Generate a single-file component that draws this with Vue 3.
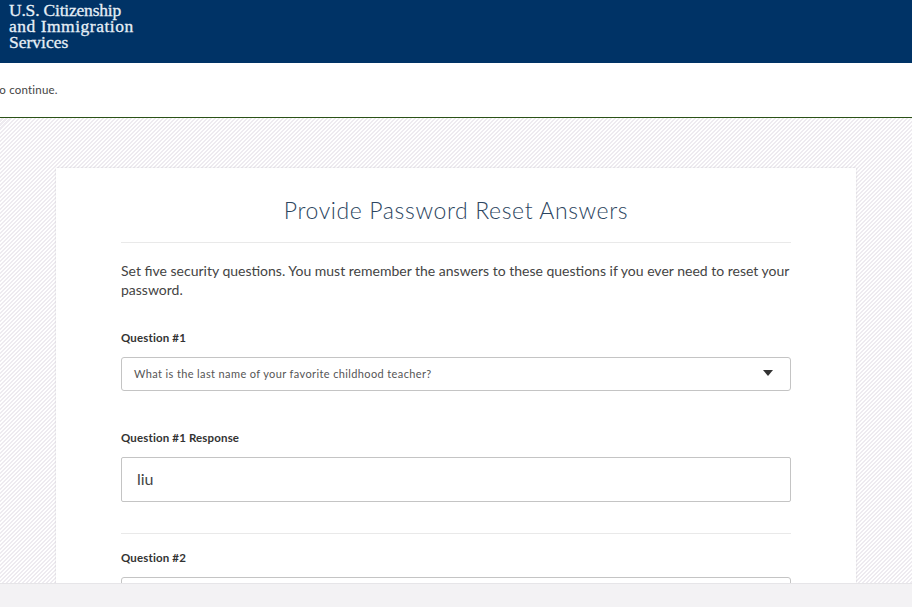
<template>
  <div class="page">
    <header class="site-header">
      <div class="agency-name">
        <span class="name-first">U.S. Citizenship</span>
        <span class="name-second">and Immigration</span>
        <span>Services</span>
      </div>
    </header>

    <div class="notice">
      <p>to continue.</p>
    </div>

    <main class="content">
      <section class="card">
        <h1 class="card-title">Provide Password Reset Answers</h1>
        <hr class="rule" />
        <p class="intro">
          Set five security questions. You must remember the answers to these questions if you ever need to reset your password.
        </p>

        <div class="question-block">
          <label class="field-label">Question #1</label>
          <div class="select-box">
            <span>What is the last name of your favorite childhood teacher?</span>
            <svg class="caret" width="10" height="6" viewBox="0 0 10 6">
              <path d="M0 0h10L5 6z" fill="#333"></path>
            </svg>
          </div>

          <label class="field-label response-label">Question #1 Response</label>
          <div class="text-box">liu</div>
        </div>

        <hr class="rule rule-between" />

        <div class="question-block">
          <label class="field-label second-label">Question #2</label>
          <div class="select-box"></div>
        </div>
      </section>
    </main>

    <footer class="site-footer"></footer>
  </div>
</template>

<script setup>
</script>

<style>
html,
body {
  margin: 0;
  overflow: hidden;
}
</style>

<style scoped>
.page {
  height: 100vh;
  display: flex;
  flex-direction: column;
  font-family: "Lato", "Liberation Sans", sans-serif;
  color: #333;
}

.site-header {
  flex: none;
  height: 63px;
  background: #003366;
  overflow: hidden;
}

.agency-name {
  display: flex;
  flex-direction: column;
  padding: 2px 0 0 9px;
  font-family: "Liberation Serif", serif;
  font-size: 17.5px;
  font-weight: 400;
  line-height: 16px;
  color: #e6eff6;
  -webkit-text-stroke: 0.3px #e6eff6;
}

.name-first {
  letter-spacing: -0.2px;
}

.name-second {
  letter-spacing: 0.5px;
}

.notice {
  flex: none;
  height: 54px;
  display: flex;
  align-items: center;
  background: #fff;
  border-bottom: 1px solid #2a5216;
  overflow: hidden;
}

.notice p {
  margin: 0 0 2px -5px;
  font-size: 11.5px;
  letter-spacing: 0.2px;
  color: #444;
}

.content {
  flex: 1;
  min-height: 0;
  overflow: hidden;
  padding: 50px 56px 0;
  background: repeating-linear-gradient(135deg, #fff 0, #fff 1.41px, #eeebf0 1.41px, #eeebf0 2.83px);
}

.card {
  width: 800px;
  box-sizing: border-box;
  padding: 24px 65px 0;
  background: #fff;
  box-shadow: 0 0 2px rgba(120, 110, 130, 0.25);
  height: 480px;
}

.card-title {
  margin: 0;
  text-align: center;
  font-size: 23px;
  line-height: 36px;
  font-weight: 300;
  letter-spacing: 0.62px;
  color: #2c4560;
}

.rule {
  margin: 14px 0 0;
  border: 0;
  border-top: 1px solid #e9e9e9;
}

.intro {
  margin: 18px 0 0;
  font-size: 14px;
  line-height: 19px;
  color: #444;
}

.question-block {
  display: flex;
  flex-direction: column;
}

.field-label {
  margin-top: 31px;
  font-size: 11.5px;
  line-height: 16px;
  font-weight: 700;
  letter-spacing: 0.15px;
  color: #333;
}

.response-label {
  margin-top: 39px;
}

.second-label {
  margin-top: 16px;
}

.select-box {
  box-sizing: border-box;
  height: 34px;
  margin-top: 11px;
  padding: 0 12px 2px;
  display: flex;
  align-items: center;
  justify-content: space-between;
  border: 1px solid #c4c4c4;
  border-radius: 3px;
  font-size: 11px;
  letter-spacing: 0.38px;
  color: #555;
}

.caret {
  margin-right: 5px;
}

.text-box {
  box-sizing: border-box;
  height: 45px;
  margin-top: 11px;
  padding: 0 15px 2px;
  display: flex;
  align-items: center;
  border: 1px solid #c4c4c4;
  border-radius: 2px;
  font-size: 16px;
  color: #444;
}

.rule-between {
  margin-top: 31px;
}

.site-footer {
  flex: none;
  height: 24px;
  background: #f3f2f4;
  border-top: 1px solid #e6e5e8;
  box-sizing: border-box;
}
</style>
